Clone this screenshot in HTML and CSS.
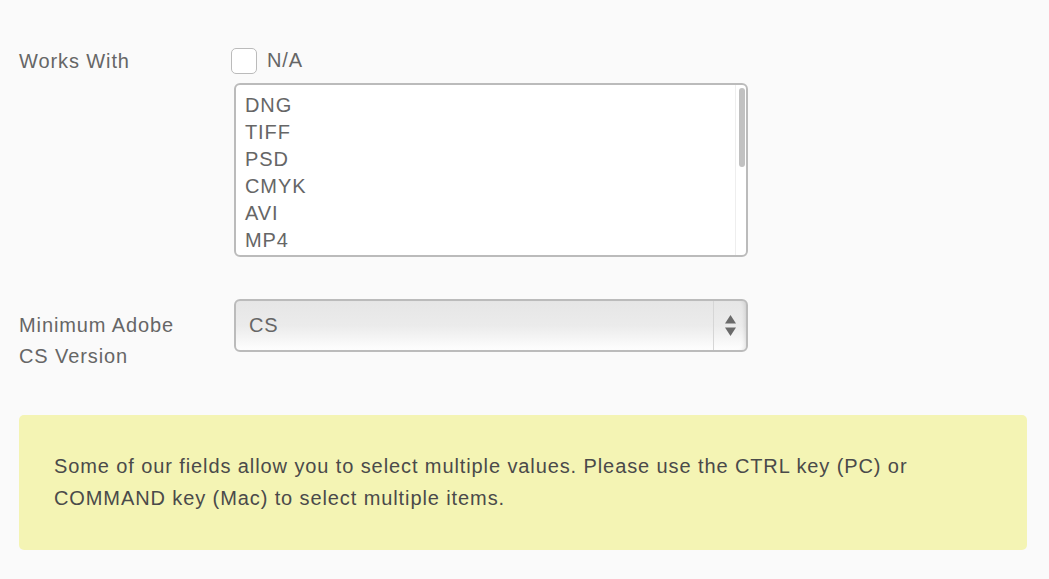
FILE: index.html
```html
<!DOCTYPE html>
<html>
<head>
<meta charset="utf-8">
<link rel="stylesheet" href="styles.css">
</head>
<body>
<div class="page">
  <div class="row row-works">
    <div class="label">Works With</div>
    <div class="control">
      <label class="check"><span class="box"></span><span class="check-text">N/A</span></label>
      <div class="listbox">
        <div class="options">
          <div class="opt">DNG</div>
          <div class="opt">TIFF</div>
          <div class="opt">PSD</div>
          <div class="opt">CMYK</div>
          <div class="opt">AVI</div>
          <div class="opt">MP4</div>
        </div>
        <div class="scrolltrack"><div class="thumb"></div></div>
      </div>
    </div>
  </div>
  <div class="row row-min">
    <div class="label">Minimum Adobe<br>CS Version</div>
    <div class="control">
      <div class="select">
        <span class="select-value">CS</span>
        <span class="select-arrows">
          <svg width="11" height="21" viewBox="0 0 11 21"><path d="M5.5 0 L11 8.5 H0 Z" fill="#6a6a6a"/><path d="M5.5 21 L11 12.5 H0 Z" fill="#6a6a6a"/></svg>
        </span>
      </div>
    </div>
  </div>
  <div class="notice">Some of our fields allow you to select multiple values. Please use the CTRL key (PC) or COMMAND key (Mac) to select multiple items.</div>
</div>
</body>
</html>
```

FILE: styles.css
```css
html, body {
  margin: 0;
  padding: 0;
  background: #fafafa;
}
body {
  font-family: "Liberation Sans", Arial, sans-serif;
  color: #666;
  font-size: 20px;
  letter-spacing: 0.9px;
}
.page {
  padding: 47px 22px 0 19px;
}
.row {
  display: flex;
}
.label {
  width: 212px;
  flex: none;
  line-height: 31px;
}
.row-works .label {
  margin-top: -1px;
}
.control {
  flex: none;
  width: 516px;
}
.check {
  display: flex;
  align-items: center;
  height: 27px;
}
.box {
  width: 24px;
  height: 24px;
  border: 1px solid #bbb;
  border-radius: 5px;
  background: #fff;
  margin-right: 10px;
}
.check-text {
  line-height: 27px;
}
.listbox {
  margin-top: 9px;
  margin-left: 3px;
  border: 2px solid #bbb;
  border-radius: 6px;
  background: #fff;
  display: flex;
  box-sizing: border-box;
  height: 174px;
  width: 514px;
  overflow: hidden;
}
.options {
  flex: 1;
  padding: 7px 0 0 9px;
  line-height: 27px;
}
.scrolltrack {
  width: 11px;
  border-left: 1px solid #eee;
  padding: 3px 2px 0 3px;
  box-sizing: border-box;
}
.thumb {
  width: 6px;
  height: 79px;
  border-radius: 3px;
  background: #c1c1c1;
}
.row-min {
  margin-top: 42px;
}
.row-min .label {
  margin-top: 11px;
}
.row-min .control {
  padding-left: 3px;
}
.select {
  display: flex;
  align-items: stretch;
  box-sizing: border-box;
  width: 514px;
  height: 53px;
  border: 2px solid #bbb;
  border-radius: 6px;
  background: linear-gradient(#e6e6e6 0%, #ebebeb 50%, #fefefe 100%);
  box-shadow: inset -4px 0 4px -3px rgba(0, 0, 0, 0.12);
}
.select-value {
  flex: 1;
  padding-left: 13px;
  line-height: 48px;
}
.select-arrows {
  width: 32px;
  border-left: 1px solid #d6d6d6;
  display: flex;
  align-items: center;
  justify-content: center;
}
.notice {
  margin-top: 43px;
  width: 1008px;
  box-sizing: border-box;
  background: #f4f4b4;
  border-radius: 5px;
  padding: 35px 35px 36px 35px;
  line-height: 32px;
  color: #4a4a4a;
}
```
